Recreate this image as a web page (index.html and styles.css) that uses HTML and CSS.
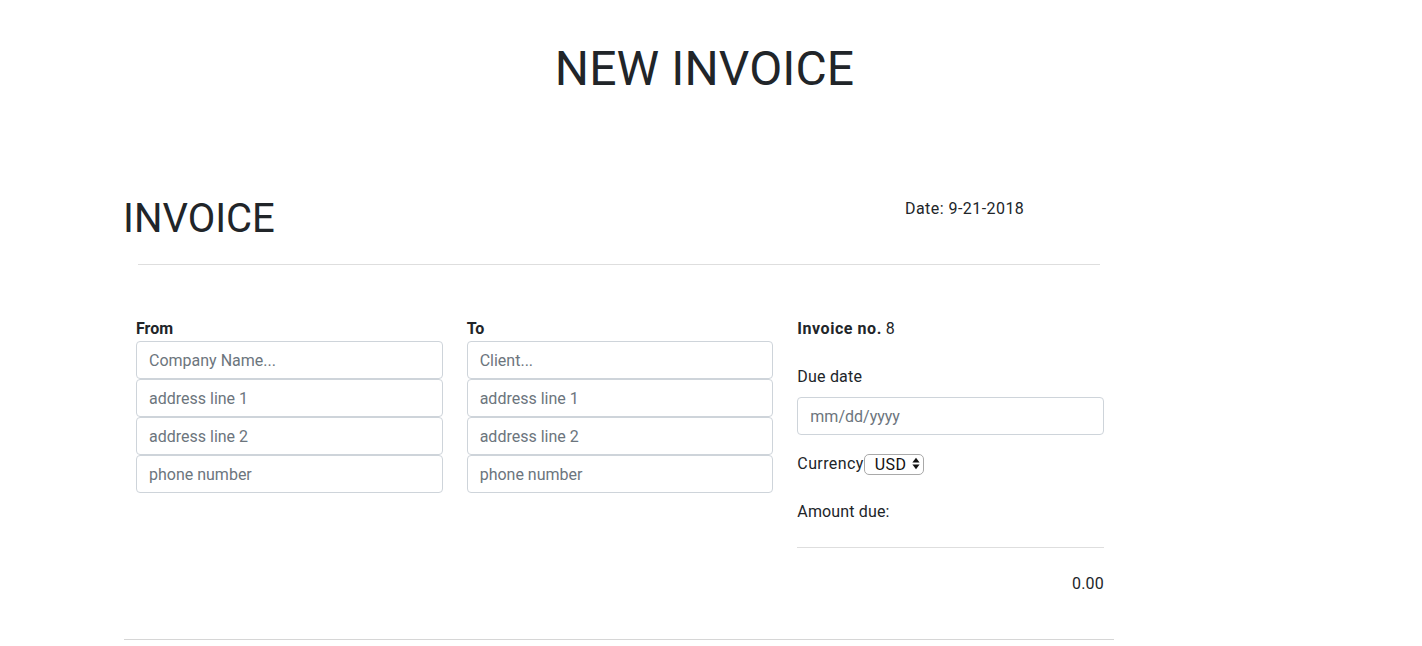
FILE: index.html
```html
<!DOCTYPE html>
<html lang="en">
<head>
<meta charset="utf-8">
<title>New Invoice</title>
<link rel="stylesheet" href="styles.css">
</head>
<body>
  <h1 class="page-title">NEW INVOICE</h1>
  <section class="invoice">
    <header class="inv-head">
      <h2 class="inv-title">INVOICE</h2>
      <div class="inv-date">Date: 9-21-2018</div>
    </header>
    <hr class="inv-rule">
    <div class="inv-grid">
      <div class="party">
        <label class="party-label">From</label>
        <input class="field" type="text" placeholder="Company Name...">
        <input class="field" type="text" placeholder="address line 1">
        <input class="field" type="text" placeholder="address line 2">
        <input class="field" type="text" placeholder="phone number">
      </div>
      <div class="party">
        <label class="party-label">To</label>
        <input class="field" type="text" placeholder="Client...">
        <input class="field" type="text" placeholder="address line 1">
        <input class="field" type="text" placeholder="address line 2">
        <input class="field" type="text" placeholder="phone number">
      </div>
      <div class="meta">
        <p class="inv-no"><strong class="inv-no-label">Invoice no.</strong> 8</p>
        <label class="due-label">Due date</label>
        <input class="field" type="text" placeholder="mm/dd/yyyy">
        <div class="currency"><span class="currency-label">Currency</span><span class="select-wrap"><select class="select"><option>USD</option></select><svg class="select-arrows" width="8" height="13" viewBox="0 0 8 13"><path d="M0.4 5.4 L4 0.8 L7.6 5.4 Z" fill="#111"/><path d="M0.4 7.6 L4 12.2 L7.6 7.6 Z" fill="#111"/></svg></span></div>
        <div class="amount-label">Amount due:</div>
        <hr class="amount-rule">
        <div class="amount">0.00</div>
      </div>
    </div>
    <hr class="bottom-rule">
  </section>
</body>
</html>
```

FILE: styles.css
```css
html, body {
  margin: 0;
  padding: 0;
  background: #fff;
}
body {
  font-family: Roboto, "Liberation Sans", Arial, sans-serif;
  font-size: 16px;
  line-height: 24px;
  color: #212529;
}
.page-title {
  width: 1409px;
  margin: 40px 0 0 0;
  text-align: center;
  font-size: 48px;
  line-height: 57.6px;
  font-weight: 400;
  letter-spacing: 0.1px;
}
.invoice {
  width: 990px;
  margin: 97.6px 0 0 124px;
}
.inv-head {
  display: flex;
  align-items: flex-start;
}
.inv-title {
  margin: 0 0 0 -1px;
  width: 782px;
  font-size: 40px;
  line-height: 48px;
  font-weight: 400;
}
.inv-date {
  padding-top: 2px;
  letter-spacing: 0.45px;
}
.inv-rule {
  margin: 21px 14px 0 14px;
  border: 0;
  border-top: 1px solid #dedede;
  height: 0;
}
.inv-grid {
  margin-top: 52px;
  padding: 0 10px 0 12px;
  display: grid;
  grid-template-columns: repeat(3, 1fr);
  column-gap: 24px;
  align-items: start;
}
.party {
  display: flex;
  flex-direction: column;
}
.party-label {
  font-weight: 700;
  line-height: 24px;
}
.field {
  display: block;
  box-sizing: border-box;
  width: 100%;
  height: 38px;
  margin: 0;
  padding: 6px 12px;
  border: 1px solid #ced4da;
  border-radius: 4px;
  font-family: Roboto, "Liberation Sans", Arial, sans-serif;
  font-size: 16px;
  line-height: 24px;
  color: #495057;
  background: #fff;
}
.field::placeholder {
  color: #6c757d;
  opacity: 1;
}
.meta {
  display: flex;
  flex-direction: column;
}
.inv-no {
  margin: 0 0 24px 0;
}
.inv-no-label {
  letter-spacing: 0.55px;
}
.due-label {
  margin-bottom: 8px;
  letter-spacing: 0.2px;
}
.currency {
  margin-top: 15.5px;
  height: 26px;
  display: flex;
  align-items: center;
}
.currency-label {
  letter-spacing: 0.4px;
}
.select-wrap {
  position: relative;
  display: inline-block;
  height: 21px;
  margin-top: -1px;
}
.select {
  appearance: none;
  -webkit-appearance: none;
  box-sizing: border-box;
  width: 60px;
  height: 21px;
  margin: 0;
  padding: 0 0 0 10px;
  border: 1px solid #a9a9a9;
  border-radius: 5px;
  background: #fff;
  font-family: Roboto, "Liberation Sans", Arial, sans-serif;
  font-size: 16px;
  line-height: 19px;
  letter-spacing: 0.4px;
  color: #111;
}
.select-arrows {
  position: absolute;
  right: 4px;
  top: 4px;
  pointer-events: none;
}
.amount-label {
  margin-top: 23.5px;
  letter-spacing: 0.15px;
}
.amount-rule {
  margin: 23px 0 0 0;
  border: 0;
  border-top: 1px solid #dedede;
  height: 0;
}
.amount {
  margin-top: 23.5px;
  text-align: right;
  letter-spacing: 0.2px;
}
.bottom-rule {
  margin: 43.5px 0 0 0;
  border: 0;
  border-top: 1px solid #d6d6d6;
  height: 0;
}
```
